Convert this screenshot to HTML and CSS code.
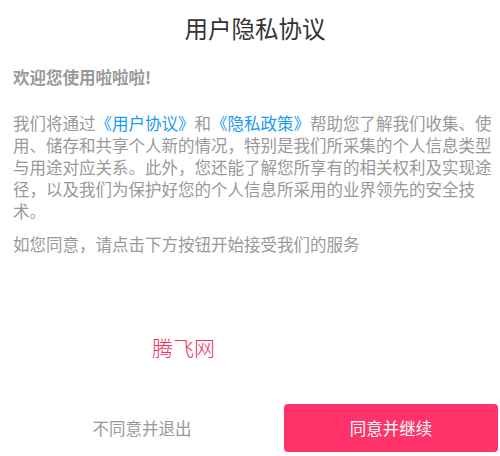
FILE: index.html
```html
<!DOCTYPE html>
<html>
<head>
    <meta charset="utf-8">
    <link rel="stylesheet" href="styles.css">
</head>
<body>
    <div class="dialog">
        <h2 class="title">用户隐私协议</h2>

        <div class="content">
            <p class="welcome">欢迎您使用啦啦啦!</p>
            <p class="desc">我们将通过<a class="link">《用户协议》</a>和<a class="link">《隐私政策》</a>帮助您了解我们收集、使用、储存和共享个人新的情况，特别是我们所采集的个人信息类型与用途对应关系。此外，您还能了解您所享有的相关权利及实现途径，以及我们为保护好您的个人信息所采用的业界领先的安全技术。</p>
            <p class="desc tip">如您同意，请点击下方按钮开始接受我们的服务</p>
        </div>

        <div class="actions">
            <button class="btn btn-cancel">不同意并退出</button>
            <button class="btn btn-ok">同意并继续</button>
        </div>

        <!-- watermark over the dialog -->
        <span class="watermark">腾飞网</span>
    </div>
</body>
</html>
```

FILE: styles.css
```css
body {
    margin: 0;
    background-color: #fff;
    font-family: 'Noto Sans CJK SC', 'Noto Sans', sans-serif;
}
.dialog {
    position: relative;
    height: 456px;
    display: flex;
    flex-direction: column;
    box-sizing: border-box;
}
.title {
    margin: 0;
    padding-left: 10px;
    height: 56px;
    line-height: 56px;
    text-align: center;
    font-size: 23.5px;
    font-weight: 400;
    color: #333;
}
.content {
    padding: 0 6px 0 13px;
    color: #999;
    font-size: 16.5px;
    line-height: 22px;
}
.content p {
    margin: 0;
}
.welcome {
    margin-top: 10px !important;
    font-weight: 700;
}
.desc {
    margin-top: 24px !important;
}
.desc.tip {
    margin-top: 11px !important;
}
.link {
    color: #1a9bf0;
    text-decoration: none;
}
.actions {
    margin-top: auto;
    display: grid;
    grid-template-columns: 1fr 214px;
    padding: 0 2px 4px 0;
}
.btn {
    height: 48px;
    border: none;
    border-radius: 4px;
    background: none;
    font-family: inherit;
    font-size: 16.5px;
    cursor: pointer;
}
.btn-cancel {
    color: #999;
}
.btn-ok {
    background-color: #ff3369;
    color: #fff;
}
.watermark {
    position: absolute;
    left: 152px;
    top: 336px;
    font-size: 21px;
    line-height: 22px;
    font-weight: 300;
    color: #f2305f;
}
```
